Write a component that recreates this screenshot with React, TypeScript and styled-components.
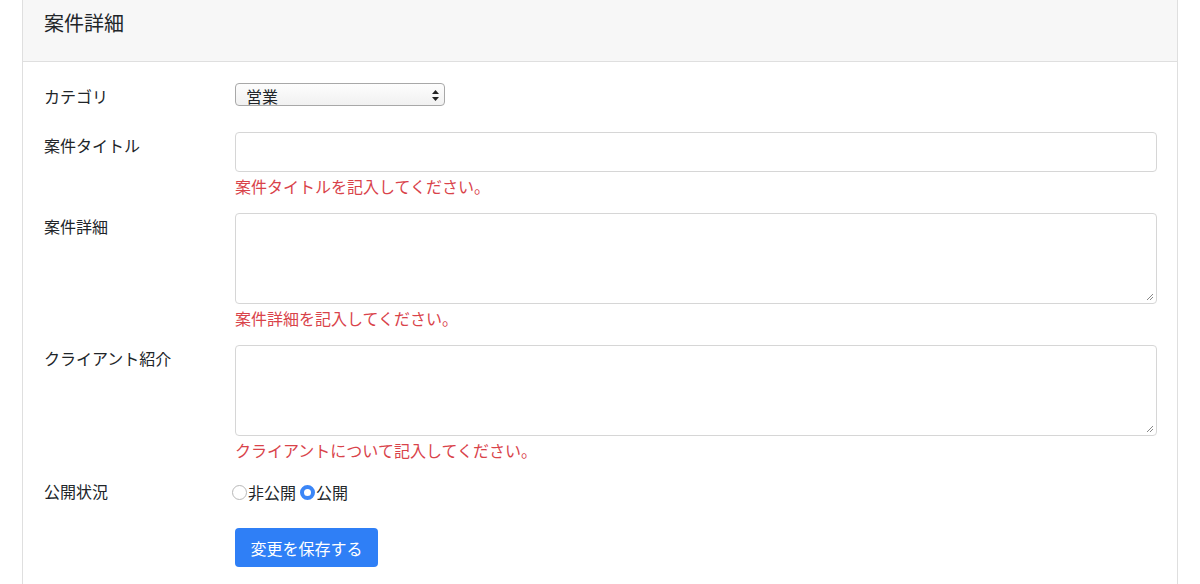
import React from "react";
import styled, { createGlobalStyle } from "styled-components";

const Global = createGlobalStyle`
  body { margin: 0; background: #fff; font-family: "Noto Sans CJK JP", "Noto Sans", sans-serif; color: #212529; }
`;
const Card = styled.div`
  margin: -10px 22px 0 22px;
  border: 1px solid #dfdfdf;
  border-top: none;
  height: 600px;
`;
const Header = styled.div`
  background: #f7f7f7;
  border-bottom: 1px solid #dfdfdf;
  height: 72px;
  box-sizing: border-box;
  padding: 19px 0 0 21px;
  font-size: 20px;
  line-height: 28px;
`;
const Body = styled.div`
  padding: 21px 20px 0 21px;
  display: flex;
  flex-direction: column;
`;
const Row = styled.div<{ mb: number }>`
  display: flex;
  margin-bottom: ${(p) => p.mb}px;
`;
const Label = styled.div`
  width: 191px;
  flex-shrink: 0;
  font-size: 16px;
  line-height: 22px;
  padding-top: 2px;
`;
const Field = styled.div`
  flex: 1;
  display: flex;
  flex-direction: column;
`;
const Select = styled.div`
  width: 210px;
  height: 23px;
  border: 1px solid #a8a8a8;
  border-radius: 4px;
  background: linear-gradient(#fdfdfd, #f1f1f1);
  box-sizing: border-box;
  display: flex;
  align-items: center;
  justify-content: space-between;
  padding: 2px 5px 0 10px;
  font-size: 16px;
`;
const Input = styled.div<{ h: number }>`
  height: ${(p) => p.h}px;
  border: 1px solid #d6d6d6;
  border-radius: 4px;
  box-sizing: border-box;
  position: relative;
`;
const Grip = styled.svg`
  position: absolute;
  right: 2px;
  bottom: 2px;
`;
const Error = styled.div`
  color: #d9434a;
  font-size: 16px;
  line-height: 22px;
  margin-top: 3px;
`;
const Radios = styled.div`
  display: flex;
  align-items: center;
  font-size: 16px;
  padding-top: 2px;
  margin-left: -3px;
`;
const Radio = styled.span<{ on?: boolean }>`
  width: 15px;
  height: 15px;
  border-radius: 50%;
  box-sizing: border-box;
  margin-right: 1px;
  margin-left: ${(p) => (p.on ? 4 : 0)}px;
  border: ${(p) => (p.on ? "4.5px solid #3b86f7" : "1px solid #b8b8b8")};
  background: #fff;
`;
const Button = styled.button`
  width: 143px;
  height: 39px;
  background: #2f7ff6;
  color: #fff;
  border: none;
  border-radius: 4px;
  font-family: inherit;
  font-size: 16px;
`;

const Resize = () => (
  <Grip width="8" height="8" viewBox="0 0 8 8">
    <path d="M7 1L1 7M7 4L4 7" stroke="#888" strokeWidth="1" />
  </Grip>
);

export default function App() {
  return (
    <>
      <Global />
      <Card>
        <Header>案件詳細</Header>
        <Body>
          <Row mb={25}>
            <Label>カテゴリ</Label>
            <Field>
              <Select>
                <span>営業</span>
                <svg width="7" height="11" viewBox="0 0 7 11">
                  <path d="M3.5 0L7 4H0Z M3.5 11L7 7H0Z" fill="#222" />
                </svg>
              </Select>
            </Field>
          </Row>
          <Row mb={16}>
            <Label>案件タイトル</Label>
            <Field>
              <Input h={40} />
              <Error>案件タイトルを記入してください。</Error>
            </Field>
          </Row>
          <Row mb={16}>
            <Label>案件詳細</Label>
            <Field>
              <Input h={91}><Resize /></Input>
              <Error>案件詳細を記入してください。</Error>
            </Field>
          </Row>
          <Row mb={17}>
            <Label>クライアント紹介</Label>
            <Field>
              <Input h={91}><Resize /></Input>
              <Error>クライアントについて記入してください。</Error>
            </Field>
          </Row>
          <Row mb={24}>
            <Label>公開状況</Label>
            <Field>
              <Radios>
                <Radio />非公開<Radio on />公開
              </Radios>
            </Field>
          </Row>
          <Row mb={0}>
            <Label />
            <Field>
              <Button>変更を保存する</Button>
            </Field>
          </Row>
        </Body>
      </Card>
    </>
  );
}
